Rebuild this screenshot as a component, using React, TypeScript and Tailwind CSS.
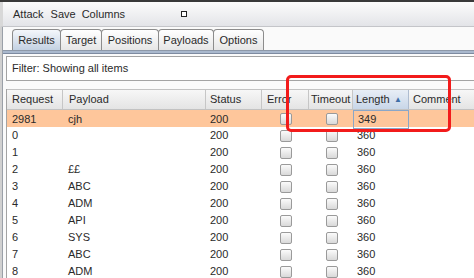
import React from "react";

const rows: [string, string][] = [
  ["2981", "cjh"],
  ["0", ""],
  ["1", ""],
  ["2", "££"],
  ["3", "ABC"],
  ["4", "ADM"],
  ["5", "API"],
  ["6", "SYS"],
  ["7", "ABC"],
  ["8", "ADM"],
];

const cols = "grid grid-cols-[56px_143px_56px_47px_44px_56px_1fr]";

function Check() {
  return (
    <div className="w-[12px] h-[12px] rounded-[2px] border border-[#9a9a9a] bg-gradient-to-b from-[#fbfbfb] to-[#d9d9d9]" />
  );
}

export default function App() {
  const tabs = ["Results", "Target", "Positions", "Payloads", "Options"];
  const tabW = ["w-[49px]", "w-[42px]", "w-[58px]", "w-[56px]", "w-[51px]"];
  return (
    <div
      className="relative w-[474px] h-[278px] overflow-hidden bg-[#fafafa] text-[11px] text-[#2a2a2a]"
      style={{ fontFamily: '"Liberation Sans", Arial, sans-serif' }}
    >
      <div className="h-[2px] bg-[#3a3a3a]" />
      {/* menu bar */}
      <div className="h-[25px] flex items-center pl-[10px] bg-gradient-to-b from-[#fcfcfc] to-[#e3e4e8] border-b border-[#c4c5c9] border-l-[3px] border-l-[#d8d8d8]">
        <span className="mr-[7px]">Attack</span>
        <span className="mr-[6px]">Save</span>
        <span>Columns</span>
        <div className="ml-[56px] w-[6px] h-[6px] border border-[#222] bg-white" />
      </div>
      <div className="flex">
        <div className="w-[3px] bg-[#d0d0d0] border-r border-[#9aa0a8]" />
        <div className="flex-1 flex flex-col">
          {/* tabs */}
          <div className="h-[21px] mt-[2px] flex pl-[9px] items-end">
            {tabs.map((t, i) => (
              <div
                key={t}
                className={`${tabW[i]} h-[21px] flex items-center justify-center border border-b-0 border-[#8c8c8c] rounded-t-[4px] -mr-px ${
                  i === 0
                    ? "bg-gradient-to-b from-[#f4f7fb] to-[#c3d1e2]"
                    : "bg-gradient-to-b from-[#ffffff] to-[#e6e6e6]"
                }`}
              >
                {t}
              </div>
            ))}
          </div>
          <div className="h-[4px] border-t border-[#8d98a8] bg-[#a9b8cd] border-b border-b-[#7d8aa0]" />
          <div className="h-[2px]" />
          {/* filter */}
          <div className="ml-[3px] h-[25px] bg-white border border-[#a3a3a3] border-r-0 flex items-center pl-[5px]">
            Filter: Showing all items
          </div>
          <div className="h-[8px]" />
          {/* table */}
          <div className="ml-[3px] bg-white border-l border-[#a3a3a3]">
            <div className={`${cols} h-[21px] border-t border-b border-[#c2c2c2] bg-gradient-to-b from-[#f7f7f7] to-[#e4e4e4]`}>
              <div className="pl-[5px] flex items-center border-r border-[#c6c6c6]">Request</div>
              <div className="pl-[6px] flex items-center border-r border-[#c6c6c6]">Payload</div>
              <div className="pl-[4px] flex items-center border-r border-[#c6c6c6]">Status</div>
              <div className="pl-[5px] flex items-center border-r border-[#c6c6c6]">Error</div>
              <div className="pl-[2px] flex items-center border-r border-[#c6c6c6] overflow-hidden whitespace-nowrap">Timeout</div>
              <div className="pl-[3px] pr-[6px] flex items-center justify-between border-r border-[#aebcd0] bg-gradient-to-b from-[#e8eef6] to-[#c8d6e8]">
                <span>Length</span>
                <span className="text-[8px] text-[#3f6fa8]">▲</span>
              </div>
              <div className="pl-[4px] flex items-center">Comment</div>
            </div>
            {rows.map(([r, p], i) => {
              const sel = i === 0;
              return (
                <div key={i} className={`${cols} h-[17px] ${sel ? "bg-[#fec69b]" : "bg-white"}`}>
                  <div className="pl-[5px] flex items-center">{r}</div>
                  <div className="pl-[5px] flex items-center">{p}</div>
                  <div className="pl-[4px] flex items-center">200</div>
                  <div className="flex items-center justify-center pl-[1px]"><Check /></div>
                  <div className="flex items-center justify-center pl-[1px]"><Check /></div>
                  <div className={`pl-[4px] flex items-center ${sel ? "border border-[#8aa6c8]" : ""}`}>
                    {sel ? "349" : "360"}
                  </div>
                  <div />
                </div>
              );
            })}
          </div>
        </div>
      </div>
      {/* red annotation box */}
      <div className="absolute left-[286px] top-[75px] w-[165px] h-[57px] border-[3px] border-[#f21b1b] rounded-[5px]" />
    </div>
  );
}
